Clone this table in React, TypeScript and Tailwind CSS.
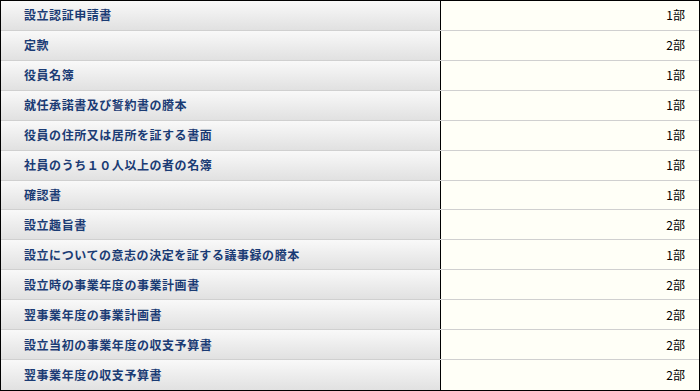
import React from 'react';

const docs: { name: string; count: number }[] = [
    { name: '設立認証申請書', count: 1 },
    { name: '定款', count: 2 },
    { name: '役員名簿', count: 1 },
    { name: '就任承諾書及び誓約書の謄本', count: 1 },
    { name: '役員の住所又は居所を証する書面', count: 1 },
    { name: '社員のうち１０人以上の者の名簿', count: 1 },
    { name: '確認書', count: 1 },
    { name: '設立趣旨書', count: 2 },
    { name: '設立についての意志の決定を証する議事録の謄本', count: 1 },
    { name: '設立時の事業年度の事業計画書', count: 2 },
    { name: '翌事業年度の事業計画書', count: 2 },
    { name: '設立当初の事業年度の収支予算書', count: 2 },
    { name: '翌事業年度の収支予算書', count: 2 },
];

export default function App() {
    return (
        <div
            className="w-[700px] h-[391px] border border-black bg-white flex flex-col"
            style={{ fontFamily: '"Noto Sans CJK JP", "Noto Sans", sans-serif' }}
        >
            {docs.map((d, i) => (
                <div
                    key={d.name}
                    className={`flex h-[30px] ${i < docs.length - 1 ? 'border-b border-[#d0d0d0]' : 'h-[29px]'}`}
                >
                    <div className="w-[440px] shrink-0 border-r border-black bg-gradient-to-b from-[#f9f9f9] to-[#e1e1e1] pl-[23px] flex items-center">
                        <span className="text-[12px] tracking-[0.55px] font-bold text-[#1a3b74] leading-none">{d.name}</span>
                    </div>
                    <div className="flex-1 bg-[#fffff7] flex items-center justify-end pr-[14px]">
                        <span className="text-[12px] text-black leading-none">{d.count}部</span>
                    </div>
                </div>
            ))}
        </div>
    );
}
